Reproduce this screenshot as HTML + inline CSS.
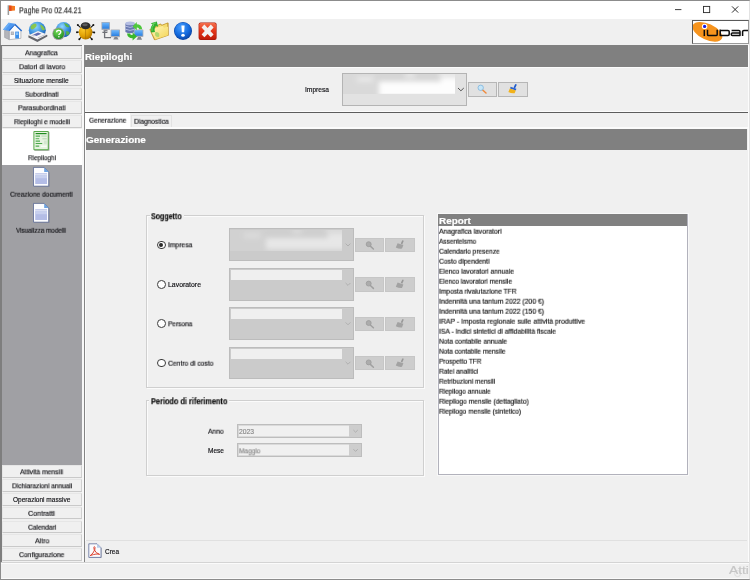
<!DOCTYPE html>
<html>
<head>
<meta charset="utf-8">
<title>Paghe Pro 02.44.21</title>
<style>
html,body{margin:0;padding:0;}
body{width:750px;height:580px;overflow:hidden;background:#f0f0f0;font-family:"Liberation Sans",sans-serif;font-size:7.3px;color:#1a1a1a;position:relative;}
.abs{position:absolute;}
.tx{position:absolute;white-space:nowrap;line-height:1;transform-origin:0 0;display:block;-webkit-text-stroke:0.18px currentColor;}
.sbtn{position:absolute;left:2.4px;width:79.2px;height:12.6px;box-sizing:border-box;background:#f0f0f0;border:1px solid #dadada;border-top-color:#e6e6e6;border-left-color:#e6e6e6;border-bottom-color:#c9c9c9;border-right-color:#d0d0d0;}
.hdr{position:absolute;background:#808080;}
.grp{position:absolute;box-sizing:border-box;border:1px solid #cfcfcf;box-shadow:inset 1px 1px 0 #fbfbfb, 1px 1px 0 #fbfbfb;}
.cap{position:absolute;background:#f0f0f0;height:4px;}
.combo{position:absolute;box-sizing:border-box;background:#cbcbcb;border:1px solid #bcbcbc;}
.gbtn{position:absolute;box-sizing:border-box;background:#cdcdcd;border:1px solid #c6c6c6;}
.radio{position:absolute;width:8.8px;height:8.8px;box-sizing:border-box;border:1px solid #3a3a3a;border-radius:50%;background:#fff;}
.radio.on:after{content:"";position:absolute;left:1.5px;top:1.5px;width:3.8px;height:3.8px;border-radius:50%;background:#2a2a2a;}
.dcombo{position:absolute;box-sizing:border-box;background:#f0f0f0;border:1px solid #bdbdbd;box-shadow:inset 0 0 0 0.8px #d2d2d2;}
.dcombo .ar{position:absolute;right:0;top:0;bottom:0;width:11.5px;background:#cdcdcd;}
</style>
</head>
<body>
<!-- window frame -->
<div class="abs" style="left:0;top:0;width:750px;height:580px;box-sizing:border-box;border:1px solid #8c8c8c;border-right-color:#b4b4b4"></div>

<!-- ============ title bar ============ -->
<div class="abs" style="left:1px;top:1px;width:748px;height:18px;background:#fff"></div>
<svg class="abs" style="left:6.5px;top:4.5px" width="9" height="10.5" viewBox="0 0 9 10.5">
  <rect x="0.6" y="0.3" width="1.5" height="9.8" fill="#9b9b9b"/>
  <path d="M2.1 0.6 L8 0.9 L8 5.6 L2.1 6 Z" fill="#f47a20"/>
  <path d="M2.1 0.6 L4.6 0.75 L4.6 5.8 L2.1 6 Z" fill="#e5491c"/>
</svg>
<svg class="abs" style="left:670px;top:3px" width="75" height="13" viewBox="0 0 75 13">
  <path d="M5 6.6 H11.4" stroke="#2a2a2a" stroke-width="0.9" fill="none"/>
  <rect x="33.5" y="3.4" width="6.2" height="6.2" stroke="#2a2a2a" stroke-width="0.9" fill="none"/>
  <path d="M62 3.4 L68.2 9.6 M68.2 3.4 L62 9.6" stroke="#222" stroke-width="0.95" fill="none"/>
</svg>

<!-- ============ toolbar ============ -->
<div class="abs" style="left:1px;top:19px;width:748px;height:25.5px;background:#f0f0f0"></div>
<svg class="abs" style="left:0;top:19px" width="222" height="26" viewBox="0 19 222 26">
  <defs>
    <radialGradient id="gl" cx="0.4" cy="0.3" r="0.75"><stop offset="0" stop-color="#8ed8ff"/><stop offset="0.55" stop-color="#3a90de"/><stop offset="1" stop-color="#1a58ac"/></radialGradient>
    <radialGradient id="gg" cx="0.4" cy="0.3" r="0.8"><stop offset="0" stop-color="#7be05a"/><stop offset="1" stop-color="#15831a"/></radialGradient>
    <radialGradient id="gb" cx="0.4" cy="0.3" r="0.8"><stop offset="0" stop-color="#4aa0ff"/><stop offset="0.6" stop-color="#1268dc"/><stop offset="1" stop-color="#0a3f9e"/></radialGradient>
    <radialGradient id="gy" cx="0.35" cy="0.3" r="0.85"><stop offset="0" stop-color="#fbc82c"/><stop offset="0.55" stop-color="#e0a004"/><stop offset="1" stop-color="#9a6200"/></radialGradient>
    <linearGradient id="gr" x1="0" y1="0" x2="0" y2="1"><stop offset="0" stop-color="#f4704e"/><stop offset="0.45" stop-color="#e63a1c"/><stop offset="1" stop-color="#c01a08"/></linearGradient>
    <linearGradient id="gf" x1="0" y1="0" x2="1" y2="1"><stop offset="0" stop-color="#fff8c0"/><stop offset="1" stop-color="#f4d454"/></linearGradient>
    <linearGradient id="gm" x1="0" y1="0" x2="0" y2="1"><stop offset="0" stop-color="#6db8ff"/><stop offset="1" stop-color="#2a7fe0"/></linearGradient>
  </defs>
  <!-- 1 home -->
  <g>
    <path d="M4.6 29.6 L9.4 30.4 L9.4 39.7 L4.6 37.5 Z" fill="#b4b5ba" stroke="#8d8e94" stroke-width="0.5"/>
    <path d="M9.4 30.6 L14.9 24.8 L20.9 30.6 L20.9 38.3 L9.4 39.7 Z" fill="#fbfbfc" stroke="#94959b" stroke-width="0.6"/>
    <path d="M3 29.7 L8.6 22.7 L15.3 23.7 L9.7 31 Z" fill="#4e98f0"/>
    <path d="M3 29.7 L8.6 22.7 L10.6 23 L5 30 Z" fill="#6aaef6"/>
    <path d="M15.3 23.7 L22.2 30.4 L21.2 31.4 L14.7 25.2 L9.7 31 L8.8 30 Z" fill="#2a6fd2"/>
    <rect x="15.2" y="31.6" width="3.8" height="6.9" fill="#3a8eea"/>
    <rect x="15.9" y="32.4" width="2.4" height="2.6" fill="#8cc4f8"/>
    <rect x="10.8" y="31.6" width="3" height="3.4" fill="#a2a3aa"/>
    <rect x="11.4" y="32.2" width="1.8" height="2.2" fill="#c4c5ca"/>
  </g>
  <!-- 2 globe + news -->
  <g>
    <circle cx="37.3" cy="30.2" r="8.5" fill="url(#gl)"/>
    <path d="M30.4 27.4 Q31.4 24 35.4 23.6 Q37.4 24.4 36.4 26.6 Q34.6 28.6 32.6 29.6 Q30.6 29.4 30.4 27.4 Z M40.2 24.6 Q43.8 25.8 45 29.6 Q43.6 31 41.8 29.4 Q40.4 27.4 40.2 24.6 Z" fill="#8cc83c" opacity="0.9"/>
    <path d="M28.4 35.4 L38 31.4 L47.3 34.9 L47.3 36.6 L37.4 41.9 L28.4 37.5 Z" fill="#66676c"/>
    <path d="M28.6 35.2 L38 31 L47.2 34.6 L37.4 39.4 Z" fill="#f4f4f7"/>
    <path d="M33 34.7 L38 32.5 L41.4 33.8 L36.4 36.1 Z" fill="#5f6cb0"/>
    <path d="M37.6 37.6 L44.6 34.4 L45.6 34.8 L38.6 38.1 Z" fill="#b4b5c0"/>
    <path d="M31 35.4 L33 34.5 L35.6 35.7 L33.6 36.6 Z" fill="#c6c7d2"/>
  </g>
  <!-- 3 globe + help -->
  <g>
    <circle cx="63.6" cy="29.6" r="7.6" fill="url(#gl)"/>
    <path d="M64 23 Q68 23.4 69.6 27 Q67 28 65.4 26 Z M66 31 Q69 31 69.8 33 Q68 36 66.4 35 Z" fill="#59b53c" opacity="0.9"/>
    <circle cx="58.6" cy="33.8" r="6.3" fill="#9a9a9a"/>
    <circle cx="58.6" cy="33.6" r="5.4" fill="url(#gg)"/>
    <path d="M56.6 32.2 Q56.6 30.4 58.7 30.4 Q60.8 30.4 60.8 32.1 Q60.8 33.2 59.6 33.8 Q58.9 34.2 58.9 35" stroke="#fff" stroke-width="1.3" fill="none"/>
    <circle cx="58.9" cy="36.7" r="0.75" fill="#fff"/>
  </g>
  <!-- 4 bug -->
  <g>
    <path d="M80.6 27.6 L78.2 25.4 M90.6 27.6 L93 25.4 M79.4 32 L77.4 32.2 M91.8 32 L93.8 32.4 M81.4 36.8 L79.6 38.8 M89.8 36.8 L91.6 38.8" stroke="#141414" stroke-width="1.1" stroke-linecap="round" fill="none"/>
    <circle cx="77.8" cy="25" r="1" fill="#141414"/><circle cx="93.4" cy="25" r="1" fill="#141414"/>
    <circle cx="77" cy="32.3" r="1" fill="#141414"/><circle cx="94.2" cy="32.5" r="1" fill="#141414"/>
    <circle cx="79.3" cy="39.2" r="1" fill="#141414"/><circle cx="91.9" cy="39.2" r="1" fill="#141414"/>
    <ellipse cx="85.6" cy="32.3" rx="6.8" ry="7.2" fill="url(#gy)"/>
    <path d="M85.6 27 L85.6 39" stroke="#a86c00" stroke-width="0.6"/>
    <ellipse cx="85.6" cy="25.8" rx="4.9" ry="3.5" fill="#2c2c2c"/>
    <ellipse cx="85" cy="24.8" rx="2.8" ry="1.4" fill="#5a5a5a"/>
  </g>
  <!-- 5 network -->
  <g>
    <path d="M104.6 30.6 L104.6 37.6 L111 37.6 M102.4 32.4 L107.4 32.4" stroke="#6e7076" stroke-width="1.3" fill="none"/>
    <rect x="101.4" y="21.9" width="8.6" height="8" rx="0.7" fill="#a9adb6"/>
    <rect x="102.2" y="22.7" width="7" height="6" fill="url(#gm)"/>
    <path d="M103 31.2 L108 31.2 L107 29.8 L104.2 29.8 Z" fill="#83868e"/>
    <rect x="110.6" y="29.4" width="9.4" height="7.8" rx="0.7" fill="#a9adb6"/>
    <rect x="111.4" y="30.2" width="7.8" height="5.8" fill="url(#gm)"/>
    <path d="M113.2 39.6 L118.6 39.6 L117.2 37 L114.6 37 Z" fill="#83868e"/>
  </g>
  <!-- 6 db sync -->
  <g>
    <path d="M125.4 23.4 L125.4 32 Q130 34.6 134.8 32 L134.8 23.4 Z" fill="#6878b0"/>
    <ellipse cx="130.1" cy="23.4" rx="4.7" ry="1.9" fill="#b4bde2"/>
    <path d="M125.4 26.2 Q130 28.6 134.8 26.2 M125.4 29.2 Q130 31.6 134.8 29.2" stroke="#c6cdee" stroke-width="0.8" fill="none"/>
    <rect x="133.8" y="29.4" width="9.6" height="7.6" rx="0.7" fill="#a9adb6"/>
    <rect x="134.6" y="30.2" width="8" height="5.6" fill="url(#gm)"/>
    <path d="M136.6 39.8 L142 39.8 L140.8 37 L138 37 Z" fill="#83868e"/>
    <path d="M132.6 26.4 L136.8 22 L136.8 24.2 Q141.6 24.2 142.2 29.2 L139.2 29.2 Q138.8 27.4 136.8 27.6 L136.8 30.2 Z" fill="#4fc83c"/>
    <path d="M137 36.4 L132.6 40.4 L132.6 38.2 Q127.6 38.2 127 33.4 L130 33.4 Q130.4 35.2 132.6 35 L132.6 32.4 Z" fill="#3ab82c"/>
  </g>
  <!-- 7 folder -->
  <g>
    <path d="M154.6 26.6 L160.4 23.6 L162 24.8 L167.6 22.4 L168.6 23 L168.8 35.6 L155 40.3 L154 39.7 L149.4 29.4 Z" fill="#c49a34"/>
    <path d="M155.4 27.2 L160.2 24.6 L161.8 25.8 L167.2 23.4 L167.8 35 L156.4 38.6 Z" fill="#f4dc70"/>
    <path d="M150.4 29.8 L162.6 26 L164 27.8 L168 26.8 L168 35.2 L155.2 39.5 Z" fill="url(#gf)"/>
    <path d="M151.2 32.4 Q149.6 27.6 152.6 24.4 L150.8 23.2 L156.8 21.4 L158.2 27 L156 25.8 Q153.8 28.2 155 32 Z" fill="#2fae2f"/>
    <path d="M152 30.8 Q151.2 27.4 153.8 24.8 L152.6 24 L156 22.8" stroke="#84e472" stroke-width="0.7" fill="none"/>
    <path d="M155 32.4 Q157.6 31.2 159.2 33.6 Q159.6 36 158.6 37 Q156.4 37.2 155.2 35.4 Z" fill="#a4d468" opacity="0.85"/>
  </g>
  <!-- 8 info -->
  <g>
    <circle cx="183" cy="31" r="9" fill="#0c48a8"/>
    <circle cx="183" cy="30.8" r="8.4" fill="url(#gb)"/>
    <path d="M181.4 25.4 L184.6 25.4 L184.2 32.2 L181.8 32.2 Z" fill="#fff"/>
    <ellipse cx="183" cy="35.2" rx="1.8" ry="1.5" fill="#fff"/>
  </g>
  <!-- 9 close -->
  <g>
    <rect x="198.6" y="22.4" width="18" height="17.5" rx="2" fill="#a8180a"/>
    <rect x="199.2" y="22.9" width="16.8" height="16.3" rx="1.6" fill="url(#gr)"/>
    <path d="M201.6 27.4 L204.4 24.6 L207.6 27.9 L210.8 24.6 L213.6 27.4 L210.4 30.9 L213.6 34.4 L210.8 37.2 L207.6 33.9 L204.4 37.2 L201.6 34.4 L204.8 30.9 Z" fill="#f3f1f0"/>
  </g>
</svg>

<!-- logo -->
<div class="abs" style="left:692px;top:20px;width:57px;height:24px;box-sizing:border-box;background:#fff;border:1px solid #5a5a5a;border-bottom-color:#9a9a9a;border-right-color:#9a9a9a;overflow:hidden">
  <svg class="abs" style="left:-1px;top:-1px" width="57" height="24" viewBox="692 20 57 24">
    <ellipse cx="707.4" cy="31.8" rx="16" ry="8" transform="rotate(25 707.4 31.8)" fill="#f7941d"/>
    <circle cx="704.6" cy="26.4" r="2.7" fill="#fff"/>
    <circle cx="704.6" cy="26.4" r="1.6" fill="#1a1ae0"/>
    <g stroke="#0c0c0c" stroke-width="1.5" fill="none" stroke-linejoin="round">
      <path d="M704.3 30 L704.3 36.1"/>
      <path d="M707.5 29.8 L707.5 34.4 Q707.5 35.5 708.7 35.5 L716 35.5 Q717.2 35.5 717.2 34.4 L717.2 29.8"/>
      <path d="M720.2 29.4 L720.2 35.5 L727.9 35.5 Q729.2 35.5 729.2 34.3 L729.2 31.5 Q729.2 30.4 727.9 30.4 L720.2 30.4"/>
      <path d="M731.6 30.4 L738.8 30.4 Q740 30.4 740 31.5 L740 35.5 L732.4 35.5 Q731.3 35.5 731.3 34.6 L731.3 33.9 Q731.3 33 732.4 33 L740 33"/>
      <path d="M742.6 36.1 L742.6 31.5 Q742.6 30.4 743.9 30.4 L749 30.4"/>
    </g>
  </svg>
</div>

<!-- dark line under toolbar -->
<div class="abs" style="left:84.4px;top:44.6px;width:663.4px;height:1px;background:#6c6c6c"></div>

<!-- ============ sidebar ============ -->
<div class="abs" style="left:0;top:45px;width:2px;height:517px;background:#7e7e7e"></div>
<div class="abs" style="left:2px;top:45.4px;width:82px;height:516.6px;background:#f0f0f0"></div>
<div class="sbtn" style="top:46.40px"></div>
<div class="sbtn" style="top:60.15px"></div>
<div class="sbtn" style="top:73.90px"></div>
<div class="sbtn" style="top:87.65px"></div>
<div class="sbtn" style="top:101.40px"></div>
<div class="sbtn" style="top:115.15px"></div>
<div class="sbtn" style="top:465.40px"></div>
<div class="sbtn" style="top:479.18px"></div>
<div class="sbtn" style="top:492.96px"></div>
<div class="sbtn" style="top:506.74px"></div>
<div class="sbtn" style="top:520.52px"></div>
<div class="sbtn" style="top:534.30px"></div>
<div class="sbtn" style="top:548.08px"></div>

<div class="abs" style="left:2.2px;top:128.6px;width:79.6px;height:36.4px;background:#fff"></div>
<div class="abs" style="left:2.2px;top:165px;width:79.6px;height:299.8px;background:#a0a0a4"></div>
<!-- riepiloghi icon -->
<svg class="abs" style="left:32px;top:130px" width="19" height="22" viewBox="32 130 19 22">
  <rect x="34.2" y="131.8" width="15.4" height="19.2" rx="1" fill="#8a8a8a" opacity="0.6"/>
  <rect x="33.4" y="131" width="15.4" height="19.2" rx="1" fill="#58a84a"/>
  <rect x="34.4" y="132" width="13.4" height="17.2" fill="#e6f3e0"/>
  <rect x="35.6" y="133" width="11" height="1.2" fill="#1f8a1f"/>
  <rect x="35.6" y="135.6" width="4.4" height="1" fill="#2f9a2f"/>
  <rect x="35.6" y="138.2" width="3.6" height="1" fill="#5db45d"/>
  <rect x="35.6" y="140.6" width="4.4" height="1" fill="#2f9a2f"/>
  <rect x="35.6" y="143" width="6.6" height="1" fill="#4aa84a"/>
  <rect x="35.6" y="145.6" width="3.6" height="1" fill="#2f9a2f"/>
  <rect x="41.4" y="135.4" width="5.4" height="1.4" fill="#c4dcc0"/>
  <rect x="42.4" y="138" width="4.4" height="1.4" fill="#c4dcc0"/>
  <rect x="44" y="140.6" width="2.8" height="3.6" fill="#d4e6d0"/>
  <rect x="41" y="145.6" width="5.8" height="1.4" fill="#f8fbf6"/>
</svg>
<!-- doc icons -->
<svg class="abs" style="left:32px;top:166px" width="19" height="22" viewBox="32 166 19 22">
  <path d="M34.2 168.2 L45 168.2 L49.4 172.8 L49.4 187 L34.2 187 Z" fill="#70707c" opacity="0.55"/>
  <path d="M33.5 167.4 L44.2 167.4 L48.7 172 L48.7 186.2 L33.5 186.2 Z" fill="#fdfdff" stroke="#5c6a94" stroke-width="0.8"/>
  <path d="M44.2 167.4 L44.2 172 L48.7 172 Z" fill="#6da2e0"/>
  <rect x="35.2" y="173.4" width="11.8" height="1" fill="#a4aede"/>
  <rect x="35.2" y="175.2" width="11.8" height="8.8" fill="#b4bde6"/>
  <rect x="35.2" y="175.2" width="11.8" height="3" fill="#c8d0ee"/>
</svg>
<svg class="abs" style="left:32px;top:202px" width="19" height="22" viewBox="32 166 19 22">
  <path d="M34.2 168.2 L45 168.2 L49.4 172.8 L49.4 187 L34.2 187 Z" fill="#70707c" opacity="0.55"/>
  <path d="M33.5 167.4 L44.2 167.4 L48.7 172 L48.7 186.2 L33.5 186.2 Z" fill="#fdfdff" stroke="#5c6a94" stroke-width="0.8"/>
  <path d="M44.2 167.4 L44.2 172 L48.7 172 Z" fill="#6da2e0"/>
  <rect x="35.2" y="173.4" width="11.8" height="1" fill="#a4aede"/>
  <rect x="35.2" y="175.2" width="11.8" height="8.8" fill="#b4bde6"/>
  <rect x="35.2" y="175.2" width="11.8" height="3" fill="#c8d0ee"/>
</svg>

<div class="abs" style="left:0px;top:44.9px;width:84.4px;height:1.1px;background:#7a7a7a"></div>
<!-- splitter -->
<div class="abs" style="left:82px;top:45.4px;width:1.8px;height:516.4px;background:#f8f8f8"></div>
<div class="abs" style="left:83.8px;top:45px;width:1.2px;height:517px;background:#858585"></div>

<!-- ============ main ============ -->
<div class="hdr" style="left:85px;top:45.2px;width:662.5px;height:21.4px"></div>
<div class="abs" style="left:85px;top:66.5px;width:662.8px;height:1px;background:#fbfbfb"></div>
<div class="abs" style="left:85px;top:66.6px;width:1px;height:45px;background:#fafafa"></div>
<!-- impresa combo -->
<div class="abs" style="left:342px;top:73px;width:125px;height:32.8px;box-sizing:border-box;background:#e2e2e2;border:1px solid #b4b4b4"></div>
<svg class="abs" style="left:343px;top:74px" width="112.4" height="19.8" viewBox="0 0 112.4 19.8">
  <defs><filter id="bl1" x="-20%" y="-50%" width="140%" height="200%"><feGaussianBlur stdDeviation="2.4"/></filter></defs>
  <rect width="112.4" height="19.8" fill="#fdfdfd"/>
  <g filter="url(#bl1)">
    <rect x="-6" y="-6" width="42" height="32" fill="#d9d9d9"/>
    <rect x="34" y="-6" width="64" height="13.5" fill="#d6d6d6"/>
    <rect x="96" y="-6" width="22" height="10" fill="#e6e6e6"/>
    <rect x="14" y="3" width="16" height="5" fill="#e8e8e8"/>
    <rect x="62" y="-2" width="10" height="6" fill="#e6e6e6"/>
  </g>
</svg>
<svg class="abs" style="left:457px;top:87px" width="8" height="5" viewBox="0 0 8 5"><path d="M1 1 L3.9 3.8 L6.8 1" stroke="#444" stroke-width="0.9" fill="none"/></svg>
<div class="abs" style="left:468px;top:82.2px;width:29px;height:14.5px;box-sizing:border-box;background:#e1e1e1;border:1px solid #b6b6b6"></div>
<div class="abs" style="left:498.2px;top:82.2px;width:29.7px;height:14.5px;box-sizing:border-box;background:#e1e1e1;border:1px solid #b6b6b6"></div>
<svg class="abs" style="left:476px;top:83px" width="14" height="13" viewBox="476 83 14 13">
  <path d="M482.4 89.8 L486 93" stroke="#f08a3c" stroke-width="1.5" stroke-linecap="round"/>
  <circle cx="480.7" cy="87.8" r="2.7" fill="#c6e6f8" stroke="#7db4dc" stroke-width="0.8"/>
</svg>
<svg class="abs" style="left:506px;top:83px" width="14" height="13" viewBox="506 83 14 13">
  <path d="M513.6 87.6 L515 84.4 Q515.6 83.6 516.4 84.2 Q517 84.8 516.4 85.6 L515 88.4 Z" fill="#1f5ccc"/>
  <path d="M510.6 86.8 L516.4 88.8 L515.8 90.4 L510 88.4 Z" fill="#2a62d0"/>
  <path d="M509.8 88.6 L515.8 90.6 L514.6 93.2 Q511.4 93.6 508.4 92 Z" fill="#f2b21a"/>
</svg>

<!-- tab strip -->
<div class="abs" style="left:85px;top:110.8px;width:662.8px;height:1.1px;background:#fbfbfb"></div>
<div class="abs" style="left:84.6px;top:111.9px;width:663.2px;height:1.1px;background:#5c5c5c"></div>
<div class="abs" style="left:85.2px;top:113px;width:45px;height:15.8px;background:#fff"></div>
<div class="abs" style="left:130.8px;top:114.8px;width:40.8px;height:12.8px;box-sizing:border-box;border:1px solid #e2e2e2;border-bottom:none;background:#f0f0f0"></div>
<div class="abs" style="left:130.4px;top:127.4px;width:617.6px;height:1.4px;background:#fbfbfb"></div>
<div class="abs" style="left:85px;top:128.8px;width:1.3px;height:412px;background:#fbfbfb"></div>
<div class="hdr" style="left:86.3px;top:129px;width:661.2px;height:20.7px"></div>

<!-- group Soggetto -->
<div class="grp" style="left:146.2px;top:215.2px;width:277.4px;height:172.6px"></div>
<div class="cap" style="left:149.6px;top:213.6px;width:34px"></div>
<!-- group Periodo -->
<div class="grp" style="left:146.2px;top:400.4px;width:277.4px;height:76px"></div>
<div class="cap" style="left:149.4px;top:398.6px;width:80px"></div>

<!-- rows -->
<div class="radio on" style="left:156.8px;top:240.6px"></div>
<div class="radio" style="left:156.8px;top:280px"></div>
<div class="radio" style="left:156.8px;top:319.2px"></div>
<div class="radio" style="left:156.8px;top:358.6px"></div>

<div class="combo" style="left:229px;top:228.4px;width:125.2px;height:33px"></div>
<svg class="abs" style="left:230.2px;top:229.6px" width="112" height="21.4" viewBox="0 0 112 21.4">
  <defs><filter id="bl2" x="-20%" y="-50%" width="140%" height="200%"><feGaussianBlur stdDeviation="2.4"/></filter></defs>
  <rect width="112" height="21.4" fill="#e7e7e7"/>
  <g filter="url(#bl2)">
    <rect x="-6" y="-6" width="42" height="34" fill="#d1d1d1"/>
    <rect x="34" y="-6" width="64" height="14" fill="#cfcfcf"/>
    <rect x="96" y="-6" width="22" height="10" fill="#dadada"/>
    <rect x="14" y="3" width="16" height="5" fill="#dcdcdc"/>
    <rect x="62" y="-2" width="10" height="6" fill="#dadada"/>
    <rect x="-6" y="19.5" width="124" height="6" fill="#d0d0d0"/>
  </g>
</svg>
<div class="combo" style="left:229px;top:267.8px;width:125.2px;height:33px"></div>
<div class="abs" style="left:231px;top:269.8px;width:111.2px;height:10.2px;background:#efefef"></div>
<div class="combo" style="left:229px;top:307.2px;width:125.2px;height:32.8px"></div>
<div class="abs" style="left:231px;top:309.2px;width:111.2px;height:10.2px;background:#efefef"></div>
<div class="combo" style="left:229px;top:346.6px;width:125.2px;height:32.8px"></div>
<div class="abs" style="left:231px;top:348.6px;width:111.2px;height:10.2px;background:#efefef"></div>

<svg class="abs" style="left:229px;top:228px" width="190" height="152" viewBox="229 228 190 152">
  <defs>
    <g id="arr"><path d="M345.6 243.6 L348 246 L350.4 243.6" stroke="#a8a8a8" stroke-width="0.8" fill="none"/></g>
    <g id="mag"><path d="M370.6 246.4 L373.4 249" stroke="#a0a0a0" stroke-width="1.5" stroke-linecap="round"/><circle cx="368.7" cy="244.2" r="2.5" fill="#acacac" stroke="#989898" stroke-width="0.7"/></g>
    <g id="bru"><path d="M400.8 243.4 L402.2 240.6 Q402.8 239.8 403.4 240.4 Q403.9 241 403.4 241.8 L402.2 244.4 Z" fill="#989898"/><path d="M397.6 243.2 L403.4 245 L402 248.6 Q398.8 249 395.8 247.4 Z" fill="#a2a2a2"/></g>
  </defs>
  <use href="#arr"/><use href="#arr" y="39.4"/><use href="#arr" y="78.8"/><use href="#arr" y="118.2"/>
</svg>
<div class="gbtn" style="left:355.4px;top:237.8px;width:28.4px;height:14.4px"></div>
<div class="gbtn" style="left:385.4px;top:237.8px;width:29.6px;height:14.4px"></div>
<div class="gbtn" style="left:355.4px;top:277.2px;width:28.4px;height:14.4px"></div>
<div class="gbtn" style="left:385.4px;top:277.2px;width:29.6px;height:14.4px"></div>
<div class="gbtn" style="left:355.4px;top:316.6px;width:28.4px;height:14.4px"></div>
<div class="gbtn" style="left:385.4px;top:316.6px;width:29.6px;height:14.4px"></div>
<div class="gbtn" style="left:355.4px;top:356px;width:28.4px;height:14.4px"></div>
<div class="gbtn" style="left:385.4px;top:356px;width:29.6px;height:14.4px"></div>
<svg class="abs" style="left:355px;top:237px" width="62" height="135" viewBox="355 237 62 135">
  <use href="#mag"/><use href="#mag" y="39.4"/><use href="#mag" y="78.8"/><use href="#mag" y="118.2"/>
  <use href="#bru"/><use href="#bru" y="39.4"/><use href="#bru" y="78.8"/><use href="#bru" y="118.2"/>
</svg>

<!-- periodo combos -->
<div class="dcombo" style="left:236.8px;top:424.2px;width:125px;height:13.6px"><div class="ar"></div></div>
<div class="dcombo" style="left:236.8px;top:443.4px;width:125px;height:13.6px"><div class="ar"></div></div>
<svg class="abs" style="left:350px;top:424px" width="12" height="34" viewBox="350 424 12 34">
  <path d="M353.4 430 L355.6 432.2 L357.8 430" stroke="#a6a6a6" stroke-width="0.8" fill="none"/>
  <path d="M353.4 449.2 L355.6 451.4 L357.8 449.2" stroke="#a6a6a6" stroke-width="0.8" fill="none"/>
</svg>

<!-- list -->
<div class="abs" style="left:437.8px;top:213.8px;width:250.2px;height:261.4px;box-sizing:border-box;background:#fff;border:1px solid #b2b2bc;box-shadow:0 0 0 1px #f8f8f8"></div>
<div class="hdr" style="left:438.4px;top:214px;width:249px;height:11.7px"></div>

<!-- bottom action bar -->
<div class="abs" style="left:86.4px;top:540px;width:661px;height:1px;background:#e0e0e0"></div>
<svg class="abs" style="left:88px;top:543px" width="14" height="16" viewBox="88 543 14 16">
  <path d="M89.4 544.4 L97.6 544.4 L101.6 548.4 L101.6 558 L89.4 558 Z" fill="#7a7a8a" opacity="0.5"/>
  <path d="M88.8 543.8 L97 543.8 L101 547.8 L101 557.4 L88.8 557.4 Z" fill="#fbfbfd" stroke="#5d6c98" stroke-width="0.8"/>
  <path d="M97 543.8 L97 547.8 L101 547.8 Z" fill="#b8cdea"/>
  <path d="M90.2 555.6 Q93.4 553.6 94.8 549.6 Q95.4 546.8 94.4 546.6 Q93.4 546.8 94.2 549.6 Q95.6 553.2 99.6 554.4 Q97 553.2 90.2 555.6 Z" stroke="#d8321e" stroke-width="0.9" fill="none" stroke-linejoin="round"/>
</svg>

<!-- right/bottom edges -->
<div class="abs" style="left:747.8px;top:45px;width:1px;height:517px;background:#fcfcfc"></div>
<div class="abs" style="left:748.8px;top:1px;width:0.7px;height:578px;background:#e2e2e2"></div>
<div class="abs" style="left:1px;top:577.8px;width:748px;height:1px;background:#fafafa"></div>
<!-- status bar -->
<div class="abs" style="left:1px;top:561.6px;width:748px;height:1px;background:#d4d4d4"></div>
<div class="abs" style="left:1px;top:562.6px;width:748px;height:1px;background:#fbfbfb"></div>

<svg class="abs" style="left:730px;top:568px" width="16" height="12" viewBox="730 568 16 12"><circle cx="737.6" cy="573.6" r="3" fill="none" stroke="#d6d6d6" stroke-width="0.7"/></svg>
<!-- texts -->
<span class="tx" style="left:19.00px;top:6px;font-size:8.7px;color:#2a2a2a;transform:translateY(0.30px) scaleX(0.8086);will-change:transform;">Paghe Pro 02.44.21</span>
<span class="tx" style="left:25.35px;top:49px;font-size:7.3px;color:#141418;transform:translateY(0.30px) scaleX(0.9372);will-change:transform;">Anagrafica</span>
<span class="tx" style="left:18.55px;top:63px;font-size:7.3px;color:#141418;transform:translateY(0.25px) scaleX(0.9434);will-change:transform;">Datori di lavoro</span>
<span class="tx" style="left:14.40px;top:77px;font-size:7.3px;color:#141418;transform:scaleX(0.8914);">Situazione mensile</span>
<span class="tx" style="left:24.90px;top:91px;font-size:7.3px;color:#141418;transform:translateY(-0.25px) scaleX(0.9100);will-change:transform;">Subordinati</span>
<span class="tx" style="left:17.90px;top:104px;font-size:7.3px;color:#141418;transform:translateY(0.30px) scaleX(0.9311);will-change:transform;">Parasubordinati</span>
<span class="tx" style="left:13.70px;top:118px;font-size:7.3px;color:#141418;transform:translateY(0.25px) scaleX(0.8849);will-change:transform;">Riepiloghi e modelli</span>
<span class="tx" style="left:20.20px;top:468px;font-size:7.3px;color:#141418;transform:translateY(0.30px) scaleX(0.9219);will-change:transform;">Attività mensili</span>
<span class="tx" style="left:11.55px;top:482px;font-size:7.3px;color:#141418;transform:translateY(0.28px) scaleX(0.8954);will-change:transform;">Dichiarazioni annuali</span>
<span class="tx" style="left:13.05px;top:496px;font-size:7.3px;color:#141418;transform:scaleX(0.8942);">Operazioni massive</span>
<span class="tx" style="left:28.35px;top:510px;font-size:7.3px;color:#141418;transform:translateY(-0.16px) scaleX(0.9682);will-change:transform;">Contratti</span>
<span class="tx" style="left:27.55px;top:524px;font-size:7.3px;color:#141418;transform:translateY(-0.30px) scaleX(0.9061);will-change:transform;">Calendari</span>
<span class="tx" style="left:34.55px;top:537px;font-size:7.3px;color:#141418;transform:translateY(0.30px) scaleX(0.9523);will-change:transform;">Altro</span>
<span class="tx" style="left:19.05px;top:551px;font-size:7.3px;color:#141418;transform:translateY(0.18px) scaleX(0.9227);will-change:transform;">Configurazione</span>
<span class="tx" style="left:27.70px;top:154px;font-size:7.3px;color:#141418;transform:translateY(0.20px) scaleX(0.8737);will-change:transform;">Riepiloghi</span>
<span class="tx" style="left:10.05px;top:191px;font-size:7.3px;color:#141418;transform:translateY(-0.30px) scaleX(0.9091);will-change:transform;">Creazione documenti</span>
<span class="tx" style="left:16.30px;top:227px;font-size:7.3px;color:#141418;transform:translateY(-0.20px) scaleX(0.8639);will-change:transform;">Visualizza modelli</span>
<span class="tx" style="left:85.10px;top:53px;font-size:9.3px;color:#ffffff;transform:scaleX(1.0481);font-weight:bold;">Riepiloghi</span>
<span class="tx" style="left:86.20px;top:136px;font-size:9.3px;color:#ffffff;transform:scaleX(1.0732);font-weight:bold;">Generazione</span>
<span class="tx" style="left:305.00px;top:86px;font-size:7.3px;color:#141418;transform:scaleX(0.9105);">Impresa</span>
<span class="tx" style="left:89.00px;top:117px;font-size:7.3px;color:#141418;transform:translateY(-0.30px) scaleX(0.8924);will-change:transform;">Generazione</span>
<span class="tx" style="left:133.60px;top:118px;font-size:7.3px;color:#141418;transform:translateY(-0.20px) scaleX(0.9098);will-change:transform;">Diagnostica</span>
<span class="tx" style="left:151.40px;top:212px;font-size:8.3px;color:#111;transform:translateY(0.20px) scaleX(0.8511);will-change:transform;font-weight:bold;">Soggetto</span>
<span class="tx" style="left:151.00px;top:397px;font-size:8.3px;color:#111;transform:translateY(0.20px) scaleX(0.8861);will-change:transform;font-weight:bold;">Periodo di riferimento</span>
<span class="tx" style="left:167.60px;top:241px;font-size:7.3px;color:#141418;transform:translateY(0.30px) scaleX(0.9257);will-change:transform;">Impresa</span>
<span class="tx" style="left:167.60px;top:281px;font-size:7.3px;color:#141418;transform:scaleX(0.9458);">Lavoratore</span>
<span class="tx" style="left:167.60px;top:320px;font-size:7.3px;color:#141418;transform:translateY(0.30px) scaleX(0.8975);will-change:transform;">Persona</span>
<span class="tx" style="left:167.60px;top:360px;font-size:7.3px;color:#141418;transform:translateY(-0.30px) scaleX(0.9251);will-change:transform;">Centro di costo</span>
<span class="tx" style="left:208.40px;top:428px;font-size:7.3px;color:#141418;transform:translateY(-0.30px) scaleX(0.9151);will-change:transform;">Anno</span>
<span class="tx" style="left:208.00px;top:447px;font-size:7.3px;color:#141418;transform:scaleX(0.8967);">Mese</span>
<span class="tx" style="left:239.00px;top:428px;font-size:7.3px;color:#8a8a8a;transform:scaleX(0.9240);">2023</span>
<span class="tx" style="left:238.60px;top:447px;font-size:7.3px;color:#8a8a8a;transform:translateY(0.30px) scaleX(0.8940);will-change:transform;">Maggio</span>
<span class="tx" style="left:438.70px;top:217px;font-size:9.3px;color:#ffffff;transform:scaleX(1.0644);font-weight:bold;">Report</span>
<span class="tx" style="left:438.90px;top:228px;font-size:7.3px;color:#141414;transform:translateY(-0.30px) scaleX(0.9367);will-change:transform;">Anagrafica lavoratori</span>
<span class="tx" style="left:438.90px;top:238px;font-size:7.3px;color:#141414;transform:translateY(-0.30px) scaleX(0.8880);will-change:transform;">Assenteismo</span>
<span class="tx" style="left:438.90px;top:248px;font-size:7.3px;color:#141414;transform:translateY(-0.30px) scaleX(0.9013);will-change:transform;">Calendario presenze</span>
<span class="tx" style="left:438.90px;top:258px;font-size:7.3px;color:#141414;transform:translateY(-0.30px) scaleX(0.9218);will-change:transform;">Costo dipendenti</span>
<span class="tx" style="left:438.90px;top:268px;font-size:7.3px;color:#141414;transform:translateY(-0.30px) scaleX(0.9119);will-change:transform;">Elenco lavoratori annuale</span>
<span class="tx" style="left:438.90px;top:278px;font-size:7.3px;color:#141414;transform:translateY(-0.30px) scaleX(0.8966);will-change:transform;">Elenco lavoratori mensile</span>
<span class="tx" style="left:438.90px;top:288px;font-size:7.3px;color:#141414;transform:translateY(-0.30px) scaleX(0.9114);will-change:transform;">Imposta rivalutazione TFR</span>
<span class="tx" style="left:438.90px;top:298px;font-size:7.3px;color:#141414;transform:translateY(-0.30px) scaleX(0.9385);will-change:transform;">Indennità una tantum 2022 (200 €)</span>
<span class="tx" style="left:438.90px;top:308px;font-size:7.3px;color:#141414;transform:translateY(-0.30px) scaleX(0.9385);will-change:transform;">Indennità una tantum 2022 (150 €)</span>
<span class="tx" style="left:438.90px;top:318px;font-size:7.3px;color:#141414;transform:translateY(-0.30px) scaleX(0.9388);will-change:transform;">IRAP - Imposta regionale sulle attività produttive</span>
<span class="tx" style="left:438.90px;top:328px;font-size:7.3px;color:#141414;transform:translateY(-0.30px) scaleX(0.9264);will-change:transform;">ISA - Indici sintetici di affidabilità fiscale</span>
<span class="tx" style="left:438.90px;top:338px;font-size:7.3px;color:#141414;transform:translateY(-0.30px) scaleX(0.9122);will-change:transform;">Nota contabile annuale</span>
<span class="tx" style="left:438.90px;top:348px;font-size:7.3px;color:#141414;transform:translateY(-0.30px) scaleX(0.9007);will-change:transform;">Nota contabile mensile</span>
<span class="tx" style="left:438.90px;top:358px;font-size:7.3px;color:#141414;transform:translateY(-0.30px) scaleX(0.8983);will-change:transform;">Prospetto TFR</span>
<span class="tx" style="left:438.90px;top:368px;font-size:7.3px;color:#141414;transform:translateY(-0.30px) scaleX(0.9008);will-change:transform;">Ratei analitici</span>
<span class="tx" style="left:438.90px;top:378px;font-size:7.3px;color:#141414;transform:translateY(-0.30px) scaleX(0.8867);will-change:transform;">Retribuzioni mensili</span>
<span class="tx" style="left:438.90px;top:388px;font-size:7.3px;color:#141414;transform:translateY(-0.30px) scaleX(0.8849);will-change:transform;">Riepilogo annuale</span>
<span class="tx" style="left:438.90px;top:398px;font-size:7.3px;color:#141414;transform:translateY(-0.30px) scaleX(0.9138);will-change:transform;">Riepilogo mensile (dettagliato)</span>
<span class="tx" style="left:438.90px;top:408px;font-size:7.3px;color:#141414;transform:translateY(-0.30px) scaleX(0.8996);will-change:transform;">Riepilogo mensile (sintetico)</span>
<span class="tx" style="left:104.50px;top:548px;font-size:7.3px;color:#141418;transform:scaleX(0.8845);">Crea</span>
<span class="tx" style="left:728.60px;top:565px;font-size:11.5px;color:#c6c6c6;transform:translateY(-0.30px) scaleX(1.1910);will-change:transform;">Atti</span>

</body>
</html>
